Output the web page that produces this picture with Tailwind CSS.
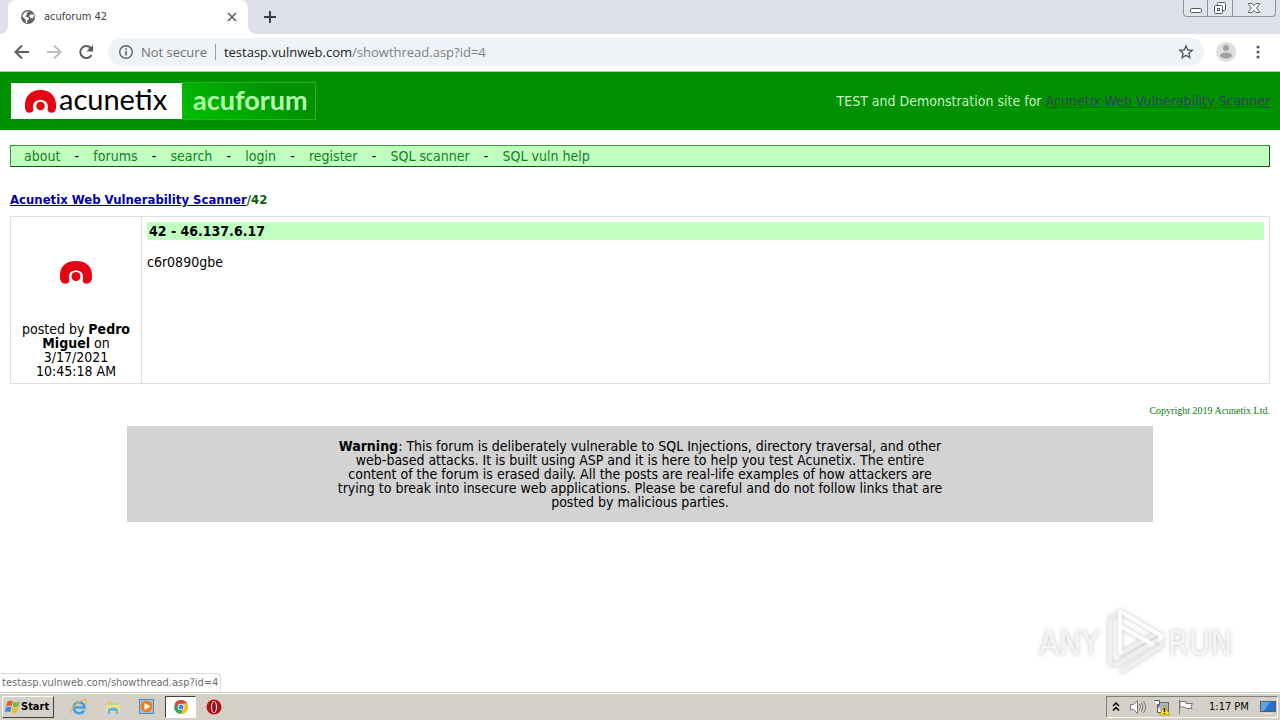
<!DOCTYPE html>
<html lang="en">
<head>
<meta charset="utf-8">
<meta name="viewport" content="width=device-width, initial-scale=1">
<title>acuforum 42</title>
<script src="https://cdn.jsdelivr.net/npm/@tailwindcss/browser@4"></script>
</head>
<body class="flex h-screen flex-col overflow-hidden bg-white font-['DejaVu_Sans_Condensed','DejaVu_Sans',sans-serif] text-[14px] leading-[14px] text-black">

<!-- Browser tab strip -->
<div class="flex h-[34px] shrink-0 items-start bg-[#dee1e9]">
  <div class="flex h-full w-2 items-end bg-white"><span class="h-full w-full rounded-br-lg bg-[#dee1e9]"></span></div>
  <div class="flex h-full w-[240px] items-center rounded-t-lg bg-white pr-2 pl-3">
    <svg class="size-4 shrink-0" viewBox="0 0 16 16" aria-hidden="true"><circle cx="8" cy="8" r="7" fill="#5f6368"/><path d="M9 2.6 6.4 4.5 6.8 6 4.8 7.4 8 8l1.200 2-1.800 1.200L7 14l-1-.2-.5-3.200L2.200 7.500l.6-1.800 2-2.300L7 2.400zM10.500 5.500l3-.3.5 2-1.500 2.400-2-.8-1.300-1.600z" fill="#fff"/></svg>
    <span class="ml-2 flex-1 text-[11px] text-[#3c4043]">acuforum 42</span>
    <button aria-label="Close tab" class="flex size-4 items-center justify-center"><svg class="size-4" viewBox="0 0 16 16" fill="none" stroke="#5f6368" stroke-width="1.700"><path d="m4 4 8 8m0-8-8 8"/></svg></button>
  </div>
  <div class="flex h-full w-2 items-end bg-white"><span class="h-full w-full rounded-bl-lg bg-[#dee1e9]"></span></div>
  <button aria-label="New tab" class="ml-1.5 flex h-full w-4 items-center justify-center"><svg class="size-4 shrink-0" viewBox="0 0 16 16" stroke="#3c4043" stroke-width="2"><path d="M8 2v12M2 8h12"/></svg></button>
  <div class="mr-1 ml-auto flex h-[17px] rounded-b-[4px] border border-t-0 border-[#8c929f] bg-[#e2e5ec]">
    <button aria-label="Minimize" class="flex w-6 justify-center border-r border-[#8c929f]"><svg class="h-4 w-5" viewBox="0 0 20 16"><rect x="4.500" y="8.500" width="11" height="4" rx="1" fill="#fff" stroke="#535866"/></svg></button>
    <button aria-label="Restore" class="flex w-[25px] justify-center border-r border-[#8c929f]"><svg class="h-4 w-5" viewBox="0 0 20 16" fill="#fff" stroke="#535866"><rect x="7.500" y="2.500" width="8" height="8" rx="1"/><rect x="4.500" y="5.500" width="8" height="8" rx="1"/><rect x="7.500" y="8.500" width="2" height="2"/></svg></button>
    <button aria-label="Close window" class="flex w-[42px] justify-center"><svg class="h-4 w-5" viewBox="0 0 20 16"><path d="M4.500 3.500h3.500l2 2.200 2-2.200h3.500v1L12.500 8l3 3.500v1H12l-2-2.200-2 2.200H4.500v-1l3-3.500-3-3.500z" fill="#fff" stroke="#535866"/></svg></button>
  </div>
</div>

<!-- Address bar -->
<div class="flex h-[38px] shrink-0 items-center border-b border-[#b9c9b0] bg-white pb-px">
  <button aria-label="Back" class="ml-3 size-5"><svg viewBox="0 0 20 20" fill="none" stroke="#5a5d61" stroke-width="2"><path d="M17 10H4M10 3.500 3.500 10l6.500 6.500"/></svg></button>
  <button aria-label="Forward" class="ml-3 size-5"><svg viewBox="0 0 20 20" fill="none" stroke="#babcbe" stroke-width="2"><path d="M3 10h13M10 3.500l6.500 6.500-6.500 6.500"/></svg></button>
  <button aria-label="Reload" class="ml-3 size-5"><svg viewBox="0 0 20 20"><path d="M15.500 13a6 6 0 1 1-.8-7L13 7.700" fill="none" stroke="#5a5d61" stroke-width="2"/><path d="M17 3v6.500h-6.500z" fill="#5a5d61"/></svg></button>
  <div class="mr-3 ml-3 flex h-[28px] flex-1 items-center rounded-full bg-[#f0f3f6] pr-2.5 pl-2.5 font-['Open_Sans','Noto_Sans',sans-serif] text-[13px]">
    <svg class="size-4 shrink-0" viewBox="0 0 16 16" aria-hidden="true"><circle cx="8" cy="8" r="6.300" fill="none" stroke="#5f6368" stroke-width="1.400"/><path d="M7.200 7h1.600v4.500H7.200zM7.200 4.300h1.600v1.600H7.200z" fill="#5f6368"/></svg>
    <span class="ml-[7px] text-[#6d7175]">Not secure</span>
    <span class="mx-2 h-4 w-px bg-[#9a9da1]"></span>
    <span class="flex-1 text-[#7b7f83]"><span class="text-[#202124]">testasp.vulnweb.com</span>/showthread.asp?id=4</span>
    <button aria-label="Bookmark" class="size-4"><svg viewBox="0 0 16 16" fill="none" stroke="#5a5d61" stroke-width="1.400"><path d="m8 2 1.800 4 4.400.4-3.300 2.900 1 4.300L8 11.300l-3.900 2.300 1-4.300L1.800 6.400 6.200 6z"/></svg></button>
  </div>
  <button aria-label="Profile" class="size-5"><svg viewBox="0 0 20 20"><circle cx="10" cy="10" r="10" fill="#dedede"/><circle cx="10" cy="6" r="3" fill="#a2a2a2"/><ellipse cx="10" cy="13.500" rx="6" ry="3" fill="#a2a2a2"/></svg></button>
  <button aria-label="Menu" class="mr-3 ml-3 size-5"><svg viewBox="0 0 20 20" fill="#5a5d61"><circle cx="10" cy="5" r="1.600"/><circle cx="10" cy="10" r="1.600"/><circle cx="10" cy="15" r="1.600"/></svg></button>
</div>

<!-- Page -->
<main class="relative flex-1 overflow-hidden">
  <header class="flex h-[58px] items-center justify-between bg-[#009000] px-2.5">
    <a href="#" aria-label="acunetix acuforum" class="block">
      <svg class="h-[38px] w-[306px]" viewBox="0 0 306 38">
        <defs><linearGradient id="glow" x1="0" y1="1" x2="1" y2=".6"><stop offset="0" stop-color="#00c000"/><stop offset=".3" stop-color="#00b400"/><stop offset=".9" stop-color="#009000"/></linearGradient></defs>
        <rect x="172" y=".5" width="133.500" height="37" fill="url(#glow)" stroke="#1cb81c"/>
        <rect x="1" y="1" width="171" height="36" fill="#fff"/>
        <path d="M15 26C14 15 20 8 30.500 8S47 15 46 26c-.5 6-7 6-8.500 2 1.500-6-1-10-7-10s-8.500 4-7 10c-1.500 4-8 4-8.500-2z" fill="#e30613"/>
        <circle cx="30.500" cy="24" r="5.800" fill="#fff"/><circle cx="30.500" cy="24" r="4.300" fill="#e30613"/>
        <text x="49" y="28" font-family="Lato, sans-serif" font-size="29" fill="#000">acunetix</text>
        <text x="183" y="28" font-family="Lato, sans-serif" font-size="27" font-weight="700" fill="#b4ffaf">acuforum</text>
      </svg>
    </a>
    <p class="text-[#c4f5c0]">TEST and Demonstration site for <a href="#" class="text-[#35405f] underline">Acunetix Web Vulnerability Scanner</a></p>
  </header>

  <nav class="mx-2.5 mt-[15px] flex h-[22px] items-center border border-t-[#389838] border-r-[#145514] border-b-[#145514] border-l-[#389838] bg-[#c0ffc0] px-[13px] text-[#10801c]">
    <a href="#">about</a><span class="w-[33px] text-center text-black">-</span>
    <a href="#">forums</a><span class="w-[33px] text-center text-black">-</span>
    <a href="#">search</a><span class="w-[33px] text-center text-black">-</span>
    <a href="#">login</a><span class="w-[33px] text-center text-black">-</span>
    <a href="#">register</a><span class="w-[33px] text-center text-black">-</span>
    <a href="#">SQL scanner</a><span class="w-[33px] text-center text-black">-</span>
    <a href="#">SQL vuln help</a>
  </nav>

  <h1 class="mx-2.5 mt-[26px] text-[13px] font-bold text-[#105f10]"><a href="#" class="text-[#0000ac] underline">Acunetix Web Vulnerability Scanner</a>/42</h1>

  <div class="mx-2.5 mt-[9px]">
    <table class="w-full border-collapse">
      <tbody><tr>
        <td class="w-[131px] border border-[#dedede] px-2 pb-[5px] text-center align-bottom">
          <svg class="mx-auto mb-[37px] h-[25px] w-[34px]" viewBox="0 0 34 25" role="img" aria-label="acunetix"><path d="M1 18C0 7 6 1 17 1s17 6 16 17c-.5 7-8 7-9.500 3 2-7-1-10.500-6.500-10.500S8.500 14 10.500 21C9 25 1.500 25 1 18z" fill="#e30613"/><circle cx="17" cy="16.500" r="6" fill="#fff"/><circle cx="17" cy="16.500" r="4.500" fill="#e30613"/></svg>
          posted by <b>Pedro<br>Miguel</b> on<br>3/17/2021<br>10:45:18 AM
        </td>
        <td class="h-[167px] border border-[#dedede] p-[5px] align-top">
          <h2 class="h-[18px] bg-[#c0ffc0] px-0.5 py-0.5 font-bold">42 - 46.137.6.17</h2>
          <p class="mt-[15px]">c6r0890gbe</p>
        </td>
      </tr></tbody>
    </table>
  </div>

  <footer>
    <p class="mx-2.5 mt-[21px] text-right font-['Liberation_Serif',serif] text-[10px] leading-[12px] text-[#087c08]">Copyright 2019 Acunetix Ltd.</p>
    <div class="mx-auto mt-[9px] w-[1026px] max-w-full bg-[#d3d3d3] py-[13px]">
      <p class="mx-auto text-center"><b>Warning</b>: This forum is deliberately vulnerable to SQL Injections, directory traversal, and other<br> web-based attacks. It is built using ASP and it is here to help you test Acunetix. The entire<br> content of the forum is erased daily. All the posts are real-life examples of how attackers are<br> trying to break into insecure web applications. Please be careful and do not follow links that are<br> posted by malicious parties.</p>
    </div>
  </footer>

  <!-- Recording watermark -->
  <svg class="absolute right-[40px] bottom-[14px] h-[76px] w-[210px] drop-shadow-[0_0_2px_#c4c4c4]" viewBox="0 0 210 76" role="img" aria-label="ANY RUN">
    <g font-family="'DejaVu Sans Condensed', sans-serif" font-size="33" fill="#f4f4f4">
      <text x="9" y="53">ANY</text>
      <text x="138" y="53">RUN</text>
    </g>
    <g fill="none" stroke-width="4" stroke-linecap="round" stroke-linejoin="round">
      <path d="M84 14l-4 3v44l5 2 46-27M92 69l40-25-2-8M90 52l34-19" stroke="#efefef"/>
      <path d="M90 50V9l42 25-2 3M90 24l32 18" stroke="#fdfdfd"/>
    </g>
  </svg>

  <!-- Link target bubble -->
  <div class="absolute bottom-0 left-0 rounded-tr-[3px] border-t border-r border-[#dadada] bg-white px-0.5 py-0.5 text-[11px] text-[#6c6c6c]">testasp.vulnweb.com/showthread.asp?id=4</div>
</main>

<!-- Taskbar -->
<div class="flex h-[28px] shrink-0 items-center border-t border-[#c8c4bb] bg-[#d4d0c8] text-[11px] shadow-[inset_0_1px_0_#fff]">
  <button class="ml-0.5 flex h-[22px] w-[52px] items-center border border-t-white border-r-[#404040] border-b-[#404040] border-l-white pl-0.5 font-bold">
    <svg class="size-4 shrink-0" viewBox="0 0 16 16" aria-hidden="true"><path d="M2.500 2.500Q5 1 7.800 2.300L6.600 7.200Q4 6 1.200 7.300z" fill="#e8572a"/><path d="M8.800 2.800q3 1.300 6-.3L13.500 7.300q-3 1.500-5.900.3z" fill="#7ab83a"/><path d="M1 8.300q2.700-1.200 5.400 0L5.200 13Q2.700 12-.1 13z" fill="#3d87d8"/><path d="M7.400 8.600q3 1.200 5.900-.2L12 13.200q-3 1.500-5.800.2z" fill="#f4bd25"/></svg>
    <span>Start</span>
  </button>
  <button aria-label="Internet Explorer" class="ml-4 size-[18px]"><svg viewBox="0 0 18 18" fill="none"><path d="M14 12.500A5.500 5.500 0 1 1 14.700 9.500H5" stroke="#3da2e5" stroke-width="2.600"/><path d="M2 15.500C-.5 12 9 1 16 2c1 .5.700 2-.4 3.600" stroke="#e7b93a" stroke-width="1.200"/></svg></button>
  <button aria-label="File Explorer" class="ml-4 size-[18px]"><svg viewBox="0 0 18 18"><path d="M2 3h5l1 2h7v9H2z" fill="#edc85f"/><path d="M4 5h10v5H4z" fill="#b8d995"/><path d="M2 7h14v7H2z" fill="#f7df8a"/><path d="M4 16v-5q5-3 10 0v5h-2v-3H6v3z" fill="#65b7df"/></svg></button>
  <button aria-label="Media Player" class="ml-4 size-[18px]"><svg viewBox="0 0 18 18"><rect x="1.500" y="1.500" width="14" height="14" fill="#9bc5ee" stroke="#4b89c4"/><circle cx="8.500" cy="8.500" r="6" fill="#ef7e19"/><path d="m6.500 5 6 3.500-6 3.500z" fill="#fff"/></svg></button>
  <button aria-label="Chrome" class="ml-[9px] flex h-[22px] w-[31px] items-center justify-center border border-t-[#404040] border-r-white border-b-white border-l-[#404040] bg-white"><svg class="size-4" viewBox="0 0 16 16"><circle cx="8" cy="8" r="7" fill="#36a852"/><path d="M2 4.400a7 7 0 0 1 12.100.1H8L5.200 9.800z" fill="#e34133"/><path d="M14.100 4.500A7 7 0 0 1 7.600 15l3.200-5.500L10 4.500z" fill="#fbc116"/><circle cx="8" cy="8" r="3.300" fill="#fff"/><circle cx="8" cy="8" r="2.500" fill="#4285f4"/></svg></button>
  <button aria-label="Opera" class="ml-[9px] size-[18px]"><svg viewBox="0 0 18 18"><circle cx="9" cy="9" r="7.500" fill="#b01218"/><ellipse cx="9" cy="9" rx="3" ry="6" fill="#fff"/><ellipse cx="9" cy="9" rx="1.900" ry="5.300" fill="#941015"/></svg></button>
  <div class="mr-0.5 ml-auto flex h-[22px] items-center border border-t-[#808080] border-r-white border-b-white border-l-[#808080] pl-1">
    <button aria-label="Show hidden icons" class="h-4 w-2.5"><svg viewBox="0 0 10 16" fill="none" stroke="#000" stroke-width="1.500"><path d="m2 7 3-3 3 3M2 11.500l3-3 3 3"/></svg></button>
    <svg class="ml-2 size-[18px]" viewBox="0 0 18 18" role="img" aria-label="Volume"><path d="M1.500 6.500h3l4-4v13l-4-4h-3z" fill="#fff" stroke="#777"/><path d="M10.500 6q2 3 0 6M12.500 4.500q3 4.500 0 9M14.500 3q4 6 0 12" fill="none" stroke="#777"/></svg>
    <svg class="ml-1.5 size-[18px]" viewBox="0 0 18 18" role="img" aria-label="Network warning"><rect x="5.500" y="4.500" width="10" height="9" fill="#a9b8c8" stroke="#666"/><path d="M1.500 2.500h5v4h-2v8h4" fill="#fff" stroke="#555"/><path d="m11.500 7 5.500 10H6.500z" fill="#ffdd20" stroke="#a98600" stroke-width=".7"/><path d="M11.500 10v4M11.500 15v1" stroke="#000" stroke-width="1.300"/></svg>
    <svg class="ml-1.5 size-[18px]" viewBox="0 0 18 18" role="img" aria-label="Action Center" fill="#fff" stroke="#777"><path d="M2.500 2v14"/><path d="M3 3.500h6v2h6.500l-1.500 3 1 2H9l-1-1.500H3z"/></svg>
    <time class="ml-[14px] w-10">1:17 PM</time>
    <button aria-label="Show desktop" class="ml-2.5 size-[18px]"><svg viewBox="0 0 18 18"><rect x="1.500" y="3.500" width="15" height="10" fill="#2672c8" stroke="#4f5e70"/><path d="M2 4h9L5 13H2z" fill="#5da4e7"/><path d="M5 15h8v1H5z" fill="#e7e7e7"/></svg></button>
  </div>
</div>
</body>
</html>
